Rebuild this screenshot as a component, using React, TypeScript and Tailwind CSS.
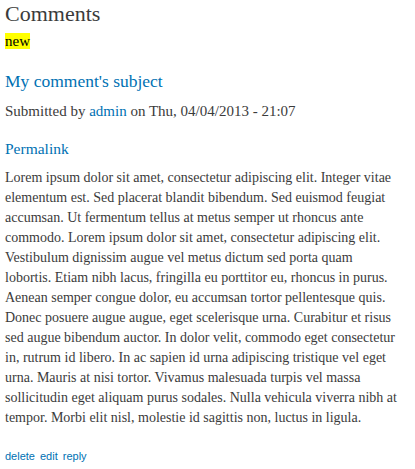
export default function App() {
  return (
    <div className="min-h-[469px] bg-white px-[5px] pt-[1px] text-[#3b3b3b] [font-family:'Liberation_Serif',serif]">
      <h2 className="text-[22px] leading-[26px]">Comments</h2>
      <div className="mt-[6px] text-[15px] leading-[16px]">
        <span className="bg-[#ffff00] text-black">new</span>
      </div>
      <h3 className="mt-[21px] text-[17.5px] leading-[22px] text-[#0071b3]">My comment's subject</h3>
      <div className="mt-[9px] text-[15px] leading-[20px]">
        Submitted by <a className="text-[#0071b3]">admin</a> on Thu, 04/04/2013 - 21:07
      </div>
      <div className="mt-[18px] text-[15.5px] leading-[20px] text-[#0071b3]">Permalink</div>
      <p className="mt-[9px] w-[394px] text-[14px] leading-[20px]">
        Lorem ipsum dolor sit amet, consectetur adipiscing elit. Integer vitae elementum est. Sed placerat blandit bibendum. Sed euismod feugiat accumsan. Ut fermentum tellus at metus semper ut rhoncus ante commodo. Lorem ipsum dolor sit amet, consectetur adipiscing elit. Vestibulum dignissim augue vel metus dictum sed porta quam lobortis. Etiam nibh lacus, fringilla eu porttitor eu, rhoncus in purus. Aenean semper congue dolor, eu accumsan tortor pellentesque quis. Donec posuere augue augue, eget scelerisque urna. Curabitur et risus sed augue bibendum auctor. In dolor velit, commodo eget consectetur in, rutrum id libero. In ac sapien id urna adipiscing tristique vel eget urna. Mauris at nisi tortor. Vivamus malesuada turpis vel massa sollicitudin eget aliquam purus sodales. Nulla vehicula viverra nibh at tempor. Morbi elit nisl, molestie id sagittis non, luctus in ligula.
      </p>
      <div className="mt-[21px] flex gap-[5px] text-[11px] leading-[14px] text-[#0071b3] [font-family:'Liberation_Sans',sans-serif]">
        <a>delete</a>
        <a>edit</a>
        <a>reply</a>
      </div>
    </div>
  );
}
